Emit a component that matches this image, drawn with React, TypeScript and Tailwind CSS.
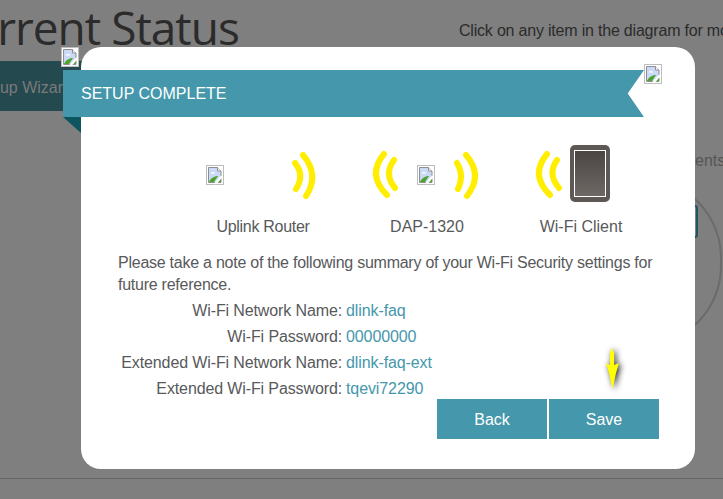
const rows = [
  { label: "Wi-Fi Network Name:", value: "dlink-faq" },
  { label: "Wi-Fi Password:", value: "00000000" },
  { label: "Extended Wi-Fi Network Name:", value: "dlink-faq-ext" },
  { label: "Extended Wi-Fi Password:", value: "tqevi72290" },
];

// chrome's broken image placeholder
function BrokenImage({ className }: { className: string }) {
  return (
    <svg className={className} width="18" height="20" viewBox="0 0 18 20">
      <rect x="0.5" y="0.5" width="17" height="19" fill="#fff" stroke="#bdbdbd" />
      <path d="M2.500 2.500h9l3.500 3.500v11.500h-12.500z" fill="#c9d9f6" stroke="#8f8f8f" />
      <path d="M11.500 2.500v3.500h3.500" fill="#fff" stroke="#8f8f8f" />
      <path d="M4.500 8.500c1-2 3.500-2 5 0z" fill="#fff" />
      <path d="M3 17c1.500-3.500 5-6 9-6l-4 6z" fill="#4ea32f" />
      <path d="M8 18.500l7-8 2 1.500-7 7.500z" fill="#fff" />
      <path d="M12.500 17l2.500-3v3z" fill="#4ea32f" />
    </svg>
  );
}

function Wave({ d }: { d: string }) {
  return <path d={d} fill="none" stroke="#ffee00" strokeWidth="6" strokeLinecap="round" />;
}

export default function App() {
  return (
    <div className="relative h-[499px] w-[723px] overflow-hidden bg-[#7f7f7f] font-['Liberation_Sans',Arial,sans-serif]">
      {/* page behind the dialog */}
      <div className="flex h-[61px] items-start justify-between">
        <h1 className="ml-[-58px] mt-[-5px] whitespace-nowrap font-['Open_Sans',sans-serif] text-[46px] leading-[64px] tracking-[-1px] text-[#2b2b2b]">
          Current Status
        </h1>
        <p className="mt-[22px] w-[264px] shrink-0 whitespace-nowrap text-base leading-[18px] tracking-[-0.2px] text-[#2b2b2b]">
          Click on any item in the diagram for more
        </p>
      </div>
      <div className="flex h-[50px] w-[90px] items-center justify-end bg-[#24494f] pr-[18px] pt-[4px]">
        <span className="whitespace-nowrap text-base text-[#7a7a7a]">Setup Wizard</span>
      </div>
      <span className="absolute left-[695px] top-[152px] text-base leading-[18px] text-[#555]">ents</span>
      <div className="absolute left-[560px] top-[177px] h-[170px] w-[162px] rounded-full border-2 border-[#6b6b6b]" />
      <div className="absolute left-[680px] top-[205px] h-[33px] w-[18px] rounded-[3px] border-2 border-[#1f565f]" />
      <div className="absolute inset-x-0 top-[478px] h-px bg-[#666]" />

      {/* dialog */}
      <div className="absolute left-[81px] top-[47px] h-[422px] w-[614px] rounded-[20px] bg-white">
        <BrokenImage className="absolute left-[-20px] top-0" />
        <BrokenImage className="absolute left-[563px] top-[17px]" />

        <div className="ml-[-18px] mt-[23px] flex h-[47px] w-[581px] items-center bg-[#4597ab] pl-[18px] text-base text-white [clip-path:polygon(0_0,100%_0,97.2%_50%,100%_100%,0_100%)]">
          SETUP COMPLETE
        </div>
        <div className="ml-[-18px] h-[16px] w-[18px] bg-[#0f555f] [clip-path:polygon(0_0,100%_0,100%_100%)]" />

        {/* diagram */}
        <div className="ml-[112px] mt-[12px] flex">
          <div className="relative w-[140px] text-center text-base text-[#58595b]">
            <svg width="140" height="60" viewBox="193 145 140 60">
              <Wave d="M295 163Q305 175 296 189" />
              <Wave d="M303 155Q320 175 306 196" />
            </svg>
            <BrokenImage className="absolute left-[13px] top-[20px]" />
            <div className="mt-[13px] leading-[18px] tracking-[-0.3px]">Uplink Router</div>
          </div>
          <div className="relative ml-[24px] w-[140px] text-center text-base text-[#58595b]">
            <svg width="140" height="60" viewBox="357 145 140 60">
              <Wave d="M394 160Q383.500 174 395 188" />
              <Wave d="M384 154Q366.500 175 387 195" />
              <Wave d="M457 163Q464.500 175 458 189" />
              <Wave d="M466 155Q483.500 175 467 196" />
            </svg>
            <BrokenImage className="absolute left-[60px] top-[20px]" />
            <div className="mt-[13px] leading-[18px]">DAP-1320</div>
          </div>
          <div className="ml-[14px] w-[140px] text-center text-base text-[#58595b]">
            <svg width="140" height="60" viewBox="511 145 140 60">
              <defs>
                <linearGradient id="screen" x1="0" y1="0" x2="0" y2="1">
                  <stop offset="0" stopColor="#4a4543" />
                  <stop offset="1" stopColor="#6e6865" />
                </linearGradient>
              </defs>
              <Wave d="M557 160Q547 174 559 188" />
              <Wave d="M547 154Q529.500 175 550 195" />
              <rect x="570" y="145" width="40" height="57" rx="5" fill="#5d5755" />
              <rect x="574.500" y="150.500" width="31" height="46" fill="url(#screen)" stroke="#fff" strokeWidth="1" />
            </svg>
            <div className="mt-[13px] leading-[18px]">Wi-Fi Client</div>
          </div>
        </div>

        {/* summary */}
        <p className="ml-[37px] mt-[16px] w-[550px] text-base leading-[22px] tracking-[-0.25px] text-[#58595b]">
          Please take a note of the following summary of your Wi-Fi Security settings for future reference.
        </p>
        <div className="mt-[2px]">
          {rows.map((row) => (
            <div key={row.label} className="flex h-[26px] items-center text-base">
              <span className="w-[261px] whitespace-nowrap text-right tracking-[-0.12px] text-[#58595b]">{row.label}</span>
              <span className="ml-[4px] tracking-[-0.1px] text-[#4597ab]">{row.value}</span>
            </div>
          ))}
        </div>

        <div className="ml-[356px] mt-[-3px] flex gap-[2px]">
          <button className="h-[40px] w-[110px] bg-[#4597ab] pt-px text-base text-white">Back</button>
          <button className="h-[40px] w-[110px] bg-[#4597ab] pt-px text-base text-white">Save</button>
        </div>

        {/* arrow pointing at Save */}
        <svg className="absolute left-[520px] top-[298px] drop-shadow-[2px_1px_3px_rgba(0,0,0,0.9)]" width="22" height="48" viewBox="0 0 22 48">
          <path d="M11 3L13 8L13 20L18 18L15 28L11.500 44L8 28L5 18L9 20L9 8z" fill="#ffff00" />
        </svg>
      </div>
    </div>
  );
}
